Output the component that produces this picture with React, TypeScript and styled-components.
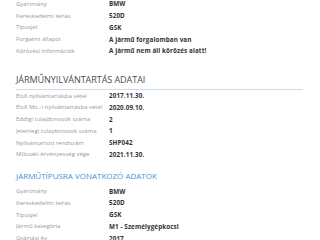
import * as React from 'react';
import styled, { createGlobalStyle } from 'styled-components';

const Global = createGlobalStyle`
  body {
    margin: 0;
    background: #fff;
    font-family: "Open Sans", "Liberation Sans", sans-serif;
  }
`;

const Page = styled.div`
  padding: 0 17px 0 16px;
  margin-top: -2px;
`;

const Table = styled.div`
  display: flex;
  flex-direction: column;
`;

const Row = styled.div`
  display: grid;
  grid-template-columns: 93px 1fr;
  height: 11.75px;
  align-items: center;
  white-space: nowrap;
`;

const Label = styled.div`
  font-size: 6px;
  color: #999;
`;

const Value = styled.div`
  font-weight: bold;
  font-size: 6.3px;
  color: #333;
  letter-spacing: 0.1px;
`;

const Heading = styled.div`
  margin-top: 16px;
  padding-bottom: 3px;
  border-bottom: 1.5px solid #c9dcf0;
  font-size: 9.1px;
  color: #4d4d4d;
  letter-spacing: -0.1px;
`;

const SubHeading = styled.div`
  margin-top: 10px;
  margin-bottom: 4px;
  font-size: 8px;
  color: #4a90d9;
`;

type Item = [string, string];

const vehicle: Item[] = [
  ['Gyártmány', 'BMW'],
  ['Kereskedelmi leírás', '520D'],
  ['Típusjel', 'GSK'],
  ['Forgalmi állapot', 'A jármű forgalomban van'],
  ['Körözési információk', 'A jármű nem áll körözés alatt!'],
];

const registry: Item[] = [
  ['Első nyilvántartásba vétel', '2017.11.30.'],
  ['Első Mo.-i nyilvántartásba vétel', '2020.09.10.'],
  ['Eddigi tulajdonosok száma', '2'],
  ['Jelenlegi tulajdonosok száma', '1'],
  ['Nyilvántartott rendszám', 'SHP042'],
  ['Műszaki érvényesség vége', '2021.11.30.'],
];

const typeData: Item[] = [
  ['Gyártmány', 'BMW'],
  ['Kereskedelmi leírás', '520D'],
  ['Típusjel', 'GSK'],
  ['Jármű kategória', 'M1 - Személygépkocsi'],
  ['Gyártási év', '2017'],
];

const Rows = ({ items }: { items: Item[] }) => (
  <Table>
    {items.map(([k, v]) => (
      <Row key={k}>
        <Label>{k}</Label>
        <Value>{v}</Value>
      </Row>
    ))}
  </Table>
);

const App = () => (
  <>
    <Global />
    <Page>
      <Rows items={vehicle} />
      <Heading>JÁRMŰNYILVÁNTARTÁS ADATAI</Heading>
      <Rows items={registry} />
      <SubHeading>JÁRMŰTÍPUSRA VONATKOZÓ ADATOK</SubHeading>
      <Rows items={typeData} />
    </Page>
  </>
);

export default App;
